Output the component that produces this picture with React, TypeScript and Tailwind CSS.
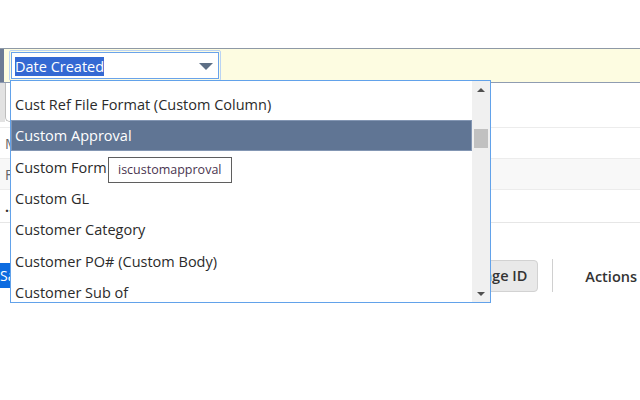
import React from "react";

const items = [
  "Cust Ref File Format (Custom Column)",
  "Custom Approval",
  "Custom Form",
  "Custom GL",
  "Customer Category",
  "Customer PO# (Custom Body)",
  "Customer Sub of",
];

function DropdownList() {
  return (
    <div className="absolute left-[10px] top-[80px] w-[481px] h-[223px] border border-[#62a2ea] bg-white flex overflow-hidden z-10">
      <div className="flex-1 pt-[7.3px] overflow-hidden">
        {items.map((label, i) => (
          <div
            key={label}
            className={
              i === 1
                ? "h-[31.33px] flex items-center pl-[4px] pt-[1px] bg-[#607594] text-white outline outline-1 -outline-offset-1 outline-[#8396b3]"
                : "h-[31.33px] flex items-center pl-[4px] pt-[1px] text-[#2b2b2b]"
            }
          >
            <span className="text-[14.5px] leading-[19px] whitespace-nowrap">{label}</span>
          </div>
        ))}
      </div>
      {/* scrollbar */}
      <div className="w-[18px] bg-[#f0f0f0] flex flex-col items-center">
        <div className="h-[17px] w-full flex items-center justify-center">
          <svg width="8" height="4" viewBox="0 0 8 4">
            <path d="M0 4 L4 0 L8 4 Z" fill="#505050" />
          </svg>
        </div>
        <div className="mt-[31px] w-[14px] h-[19px] bg-[#c1c1c1]" />
        <div className="flex-1" />
        <div className="h-[17px] w-full flex items-center justify-center">
          <svg width="8" height="4" viewBox="0 0 8 4">
            <path d="M0 0 L8 0 L4 4 Z" fill="#505050" />
          </svg>
        </div>
      </div>
    </div>
  );
}

export default function App() {
  return (
    <div className="relative w-[640px] h-[400px] bg-white overflow-hidden font-['Open_Sans',sans-serif]">
      <div className="h-[48px]" />

      {/* filter bar */}
      <div className="h-[35px] border-t border-[#8e99a6] border-b border-b-[#8f9cb1] bg-[#fdfce1] flex">
        <div className="w-[4px] bg-[#6c7b95]" />
        <div className="ml-[5px] mt-[1px] w-[212px] h-[31px] rounded-[2px] border border-[#b9d3f4] p-[1px]">
          <div className="h-full border border-[#6aa3ea] bg-white flex items-center pl-[3px] pr-[5px] pt-[2px]">
            <span className="bg-[#3469d3] text-white text-[14.5px] leading-[19px]">Date Created</span>
            <div className="flex-1" />
            <svg width="14" height="7" viewBox="0 0 14 7">
              <path d="M0 0 L14 0 L7 7 Z" fill="#5d6f85" />
            </svg>
          </div>
        </div>
      </div>

      {/* panel under the filter bar */}
      <div className="h-[45px] flex border-b border-[#ececec]">
        <div className="w-[5px] h-[39px] bg-[#e2e2e2]" />
        <div className="w-[40px] h-[39px] border-l border-b border-[#bdbdbd] rounded-bl-[5px]" />
      </div>
      <div className="h-[31px] flex items-center pl-[5px] border-b border-[#ececec] text-[14px] text-[#666]">
        Memo
      </div>
      <div className="h-[31px] flex items-center pl-[5px] border-b border-[#ececec] bg-[#f8f8f8] text-[14px] text-[#666]">
        Form
      </div>
      <div className="h-[33px] flex items-center pl-[5px] border-b border-[#e6e6e6] text-[14px] text-[#333] font-bold">
        …
      </div>

      {/* action row */}
      <div className="h-[36px]" />
      <div className="h-[33px] flex items-center">
        <div className="ml-[-1px] h-[25px] px-[1px] bg-[#0c6be0] text-white text-[14px] flex items-center">
          Save
        </div>
        <div className="flex-1" />
        <div className="h-[32px] px-[10px] pt-[1px] rounded-[4px] border border-[#d2d2d2] bg-[#e9e9e9] flex items-center text-[14.5px] font-semibold text-[#333]">
          Change ID
        </div>
        <div className="ml-[14px] w-px h-[33px] bg-[#d0d0d0]" />
        <div className="ml-[32px] mr-[3px] pt-[2px] text-[14.5px] font-semibold text-[#333]">Actions</div>
      </div>

      <DropdownList />

      {/* hover tip */}
      <div className="absolute left-[108px] top-[157px] z-20 h-[26px] px-[9px] border border-[#5f5f5f] bg-white flex items-center text-[12.5px] text-[#4a3550]">
        iscustomapproval
      </div>
    </div>
  );
}
